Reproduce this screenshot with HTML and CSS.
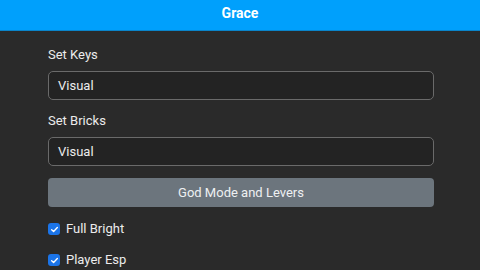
FILE: index.html
```html
<!DOCTYPE html>
<html>
<head>
<meta charset="utf-8">
<link rel="stylesheet" href="styles.css">
</head>
<body>
<header class="bar">Grace</header>
<main class="panel">
  <div class="field">
    <label class="label">Set Keys</label>
    <div class="input">Visual</div>
  </div>
  <div class="field">
    <label class="label">Set Bricks</label>
    <div class="input">Visual</div>
  </div>
  <div class="btn">God Mode and Levers</div>
  <div class="checks">
    <div class="check"><span class="box"><svg viewBox="0 0 12 12" width="9" height="9"><path d="M2.2 6.2 L4.8 8.6 L9.8 3.4" fill="none" stroke="#fff" stroke-width="1.8" stroke-linecap="round" stroke-linejoin="round"/></svg></span>Full Bright</div>
    <div class="check"><span class="box"><svg viewBox="0 0 12 12" width="9" height="9"><path d="M2.2 6.2 L4.8 8.6 L9.8 3.4" fill="none" stroke="#fff" stroke-width="1.8" stroke-linecap="round" stroke-linejoin="round"/></svg></span>Player Esp</div>
  </div>
</main>
</body>
</html>
```
FILE: styles.css
```css
html, body {
  margin: 0;
  padding: 0;
  background: #2a2a2a;
  font-family: Roboto, "Liberation Sans", sans-serif;
  color: #ececec;
  overflow: hidden;
}
.bar {
  height: 30px;
  background: #00a0fc;
  border-bottom: 1px solid #0a84c9;
  color: #fff;
  font-weight: 700;
  font-size: 14px;
  display: flex;
  align-items: center;
  justify-content: center;
  padding-bottom: 5px;
  box-sizing: border-box;
  height: 31px;
}
.panel {
  padding: 16px 46px 0 48px;
  display: flex;
  flex-direction: column;
}
.field {
  display: flex;
  flex-direction: column;
  margin-bottom: 13px;
}
.field:nth-child(2) { margin-bottom: 12px; }
.label {
  font-size: 13px;
  line-height: 16px;
  margin-bottom: 8px;
}
.input {
  height: 29px;
  box-sizing: border-box;
  border: 1px solid #6a6a6a;
  border-radius: 5px;
  background: #232323;
  padding: 0 9px;
  font-size: 13px;
  display: flex;
  align-items: center;
}
.btn {
  height: 29px;
  background: #6c757d;
  border-radius: 4px;
  font-size: 13px;
  color: #eef0f2;
  display: flex;
  align-items: center;
  justify-content: center;
}
.checks {
  display: flex;
  flex-direction: column;
  gap: 15px;
  margin-top: 14px;
}
.check {
  display: flex;
  align-items: center;
  font-size: 13px;
  line-height: 16px;
  gap: 6px;
}
.box {
  width: 12px;
  height: 12px;
  border-radius: 3px;
  background: #1b74e8;
  display: flex;
  align-items: center;
  justify-content: center;
}
```
